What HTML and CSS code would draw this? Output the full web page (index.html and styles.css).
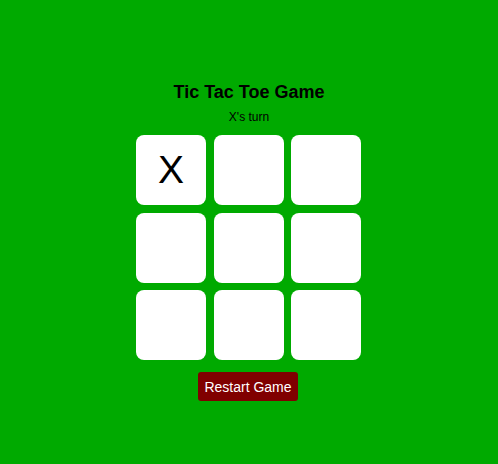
FILE: index.html
```html
<!DOCTYPE html>
<html>
<head>
<meta charset="utf-8">
<link rel="stylesheet" href="styles.css">
</head>
<body>
<main class="game">
  <h1 class="title">Tic Tac Toe Game</h1>
  <p class="status">X's turn</p>
  <div class="board">
    <div class="cell">X</div>
    <div class="cell"></div>
    <div class="cell"></div>
    <div class="cell"></div>
    <div class="cell"></div>
    <div class="cell"></div>
    <div class="cell"></div>
    <div class="cell"></div>
    <div class="cell"></div>
  </div>
  <button class="restart">Restart Game</button>
</main>
</body>
</html>
```
FILE: styles.css
```css
html, body {
  margin: 0;
  height: 100%;
}
body {
  background: #00aa00;
  font-family: "Liberation Sans", Arial, sans-serif;
}
.game {
  display: flex;
  flex-direction: column;
  align-items: center;
  padding-top: 82px;
}
.title {
  margin: 0;
  font-size: 18px;
  font-weight: bold;
  line-height: 21px;
  color: #000;
}
.status {
  margin: 7px 0 0;
  font-size: 12px;
  line-height: 14px;
  color: #000;
}
.board {
  margin: 11px 1px 0 0;
  display: grid;
  grid-template-columns: repeat(3, 70px);
  grid-auto-rows: 70px;
  gap: 7.5px;
}
.cell {
  background: #fff;
  border-radius: 8px;
  display: flex;
  align-items: center;
  justify-content: center;
  font-size: 39px;
  color: #000;
}
.restart {
  margin: 12px 2px 0 0;
  width: 100px;
  height: 29px;
  padding: 0;
  border: none;
  border-radius: 3px;
  background: #800000;
  color: #fff;
  font-family: "Liberation Sans", Arial, sans-serif;
  font-size: 14px;
}
```
